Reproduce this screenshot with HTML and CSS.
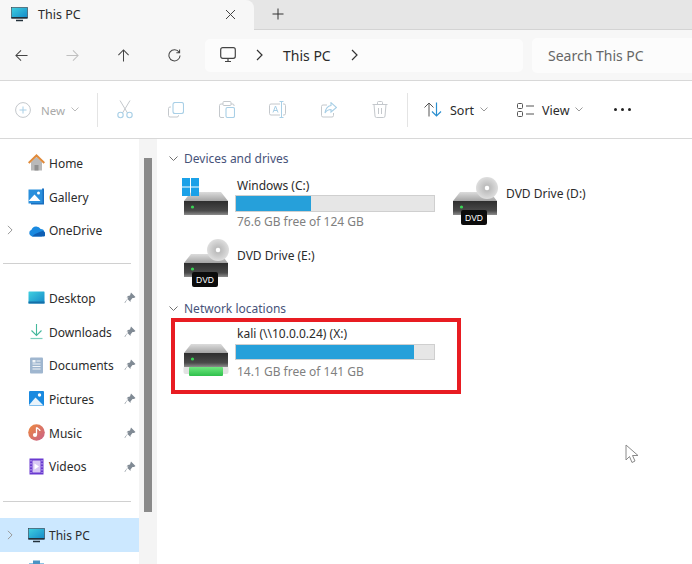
FILE: index.html
```html
<!DOCTYPE html>
<html lang="en">
<head>
    <meta charset="UTF-8">
    <title>This PC</title>
    <link rel="stylesheet" href="styles.css">
</head>
<body>
<svg class="defs" width="0" height="0">
    <defs>
        <linearGradient id="screen" x1="0" y1="0" x2="1" y2="1">
            <stop offset="0" stop-color="#3fd0e0"/>
            <stop offset="1" stop-color="#1488c8"/>
        </linearGradient>
        <linearGradient id="driveTop" x1="0" y1="0" x2="0" y2="1">
            <stop offset="0" stop-color="#dcdcdc"/>
            <stop offset="1" stop-color="#a4a4a4"/>
        </linearGradient>
        <linearGradient id="driveBody" x1="0" y1="0" x2="0" y2="1">
            <stop offset="0" stop-color="#2e2e2e"/>
            <stop offset="0.7" stop-color="#4a4a4a"/>
            <stop offset="1" stop-color="#8c8c8c"/>
        </linearGradient>
        <linearGradient id="netGreen" x1="0" y1="0" x2="0" y2="1">
            <stop offset="0" stop-color="#6fe77f"/>
            <stop offset="1" stop-color="#2fc04c"/>
        </linearGradient>
        <radialGradient id="disc">
            <stop offset="0" stop-color="#f4f4f4"/>
            <stop offset="0.25" stop-color="#bdbdbd"/>
            <stop offset="1" stop-color="#dedede"/>
        </radialGradient>
        <linearGradient id="music" x1="0" y1="0" x2="1" y2="1">
            <stop offset="0" stop-color="#ee8a3c"/>
            <stop offset="1" stop-color="#c8608c"/>
        </linearGradient>
        <symbol id="drive" viewBox="0 0 46 50">
            <path d="M8 16H38L45 25H1Z" fill="url(#driveTop)"/>
            <rect x="1" y="25" width="44" height="14" fill="url(#driveBody)"/>
            <circle cx="9.5" cy="31" r="1.6" fill="#39d353"/>
        </symbol>
        <symbol id="dvd" viewBox="0 0 46 50">
            <use href="#drive" width="46" height="50"/>
            <circle cx="35" cy="12" r="11" fill="url(#disc)"/>
            <circle cx="35" cy="12" r="2.2" fill="#fff"/>
            <rect x="9" y="34" width="26" height="15" rx="2" fill="#0c0c0c"/>
            <text class="dvd-label" x="22" y="45" text-anchor="middle">DVD</text>
        </symbol>
        <symbol id="monitor" viewBox="0 0 17 15">
            <rect x="0.5" y="0.5" width="16" height="10.5" fill="url(#screen)" stroke="#2b3a46" stroke-width="0.6"/>
            <rect x="0.5" y="10" width="16" height="1.6" fill="#23303a"/>
            <path d="M5 13.5H12" stroke="#23303a" stroke-width="1.5"/>
        </symbol>
        <symbol id="pin" viewBox="0 0 12 12">
            <path d="M7 0.5L11.5 5L10 6L8.5 6L6.5 8.5L6.5 10L3.5 7L1 11L0.5 10.5L4.5 5.5L2.5 5.5L4 4L6 3.5Z" fill="#808a94"/>
        </symbol>
        <symbol id="chev-down" viewBox="0 0 8 5">
            <path d="M0.5 0.5L4 4L7.5 0.5" fill="none" stroke="currentColor"/>
        </symbol>
        <symbol id="chev-right" viewBox="0 0 7 12">
            <path d="M1 1L6 6L1 11" fill="none" stroke="currentColor" stroke-width="1.2"/>
        </symbol>
    </defs>
</svg>

<div class="window">
    <div class="tabs">
        <div class="tab">
            <svg class="tab-icon" width="17" height="15"><use href="#monitor"/></svg>
            <span class="tab-title">This PC</span>
            <svg class="tab-close" width="11" height="11" viewBox="0 0 11 11"><path d="M1 1L10 10M10 1L1 10" stroke="#444" fill="none"/></svg>
        </div>
        <svg class="tab-new" width="12" height="12" viewBox="0 0 12 12"><path d="M6 0.5V11.5M0.5 6H11.5" stroke="#333" fill="none"/></svg>
    </div>

    <div class="nav">
        <div class="nav-buttons">
            <svg width="13" height="13" viewBox="0 0 14 14"><path d="M13.5 7H1M6.5 1.5L1 7L6.5 12.5" stroke="#444" fill="none" stroke-width="1.1"/></svg>
            <svg width="13" height="13" viewBox="0 0 14 14"><path d="M0.5 7H13M7.5 1.5L13 7L7.5 12.5" stroke="#c0c0c0" fill="none" stroke-width="1.1"/></svg>
            <svg width="13" height="13" viewBox="0 0 14 14"><path d="M7 13.5V1M1.5 6.5L7 1L12.5 6.5" stroke="#444" fill="none" stroke-width="1.1"/></svg>
            <svg width="13" height="13" viewBox="0 0 14 14"><path d="M12 3.5A6 6 0 1 0 13 7M12.5 0.5V4H9" stroke="#444" fill="none" stroke-width="1.1"/></svg>
        </div>
        <div class="address">
            <svg width="16" height="16" viewBox="0 0 16 16"><rect x="0.7" y="0.7" width="14.6" height="10.6" rx="2" fill="none" stroke="#444" stroke-width="1.2"/><path d="M5 14.5H11M8 11.5V14" stroke="#444" stroke-width="1.2" fill="none"/></svg>
            <svg class="addr-chev" width="7" height="12"><use href="#chev-right"/></svg>
            <span class="addr-text">This PC</span>
            <svg class="addr-chev" width="7" height="12"><use href="#chev-right"/></svg>
        </div>
        <div class="search">Search This PC</div>
    </div>

    <div class="toolbar">
        <div class="tool-new">
            <svg width="16" height="16" viewBox="0 0 16 16"><circle cx="8" cy="8" r="7.4" fill="none" stroke="#c4c8cc"/><path d="M8 4.5V11.5M4.5 8H11.5" stroke="#a8cfe6" fill="none"/></svg>
            <span class="tool-label dim">New</span>
            <svg class="tool-chev dim" width="8" height="5"><use href="#chev-down"/></svg>
        </div>
        <div class="tool-sep"></div>
        <div class="tool-icons">
            <svg width="16" height="19" viewBox="0 0 16 19"><path d="M3 0.5L10.5 13M13 0.5L5.5 13" stroke="#c4c8cc" fill="none"/><circle cx="3.5" cy="15" r="2.7" fill="none" stroke="#a8cfe6" stroke-width="1.1"/><circle cx="12.5" cy="15" r="2.7" fill="none" stroke="#a8cfe6" stroke-width="1.1"/></svg>
            <svg width="16" height="16" viewBox="0 0 16 16"><path d="M3 5H2A1.5 1.5 0 0 0 0.5 6.5V13.5A1.5 1.5 0 0 0 2 15H9A1.5 1.5 0 0 0 10.5 13.5V13" stroke="#c4c8cc" fill="none"/><rect x="5" y="0.5" width="10.5" height="11" rx="2" fill="none" stroke="#a8cfe6" stroke-width="1.1"/></svg>
            <svg width="16" height="17" viewBox="0 0 16 17"><path d="M4 3H2A1.5 1.5 0 0 0 0.5 4.5V15A1.5 1.5 0 0 0 2 16.5H5M12 3H14A1.5 1.5 0 0 1 15 4V5" stroke="#c4c8cc" fill="none"/><rect x="4" y="0.5" width="8" height="4" rx="1" fill="#fff" stroke="#c4c8cc"/><rect x="7" y="6.5" width="8.5" height="10" rx="1.5" fill="#fff" stroke="#a8cfe6" stroke-width="1.1"/></svg>
            <svg width="17" height="17" viewBox="0 0 17 17"><path d="M11 3H2A1.5 1.5 0 0 0 0.5 4.5V12.5A1.5 1.5 0 0 0 2 14H11M14 3H15A1.5 1.5 0 0 1 16.5 4.5V12.5A1.5 1.5 0 0 1 15 14H14" stroke="#c4c8cc" fill="none"/><path d="M12.5 0.5V16.5M10.5 0.5H14.5M10.5 16.5H14.5" stroke="#a8cfe6" fill="none"/><path d="M4 11.5L6.5 5L9 11.5M5 9.5H8" stroke="#a8cfe6" fill="none"/></svg>
            <svg width="16" height="16" viewBox="0 0 16 16"><path d="M6 3H2A1.5 1.5 0 0 0 0.5 4.5V13.5A1.5 1.5 0 0 0 2 15H11A1.5 1.5 0 0 0 12.5 13.5V11" stroke="#c4c8cc" fill="none"/><path d="M10 0.7L15.5 5.5L10 10V7.5C7.5 7.5 5.5 8.5 4 11C4.5 7 7 4 10 3.5Z" fill="none" stroke="#a8cfe6" stroke-width="1.1"/></svg>
            <svg width="16" height="17" viewBox="0 0 16 17"><path d="M0.5 3.5H15.5M5.5 3.5V1.5A1 1 0 0 1 6.5 0.5H9.5A1 1 0 0 1 10.5 1.5V3.5M2 3.5L3 15A1.5 1.5 0 0 0 4.5 16.5H11.5A1.5 1.5 0 0 0 13 15L14 3.5M6.5 7V13M9.5 7V13" stroke="#c4c8cc" fill="none"/></svg>
        </div>
        <div class="tool-sep"></div>
        <div class="tool-sort">
            <svg width="18" height="15" viewBox="0 0 18 15"><path d="M5 14.5V1M0.5 5.5L5 1L9.5 5.5" stroke="#555" fill="none"/><path d="M12.5 0.5V14M8 9.5L12.5 14L17 9.5" stroke="#2b8fd0" fill="none" stroke-width="1.2"/></svg>
            <span class="tool-label">Sort</span>
            <svg class="tool-chev" width="8" height="5"><use href="#chev-down"/></svg>
        </div>
        <div class="tool-view">
            <svg width="17" height="14" viewBox="0 0 17 14"><rect x="0.5" y="0.5" width="5" height="5" rx="1" fill="none" stroke="#555"/><rect x="0.5" y="8.5" width="5" height="5" rx="1" fill="none" stroke="#555"/><path d="M9 3H17M9 11H17" stroke="#555" fill="none"/></svg>
            <span class="tool-label">View</span>
            <svg class="tool-chev" width="8" height="5"><use href="#chev-down"/></svg>
        </div>
        <div class="tool-more"><i></i><i></i><i></i></div>
    </div>

    <div class="content">
        <div class="sidebar">
            <div class="side-row">
                <svg class="side-icon" width="17" height="17" viewBox="0 0 17 17"><path d="M3 8V16.5H14V8L8.5 3Z" fill="#b9b9b9"/><rect x="6.5" y="11" width="4" height="5.5" fill="#8f8f8f"/><path d="M0.7 9L8.5 1.5L16.3 9" fill="none" stroke="#e08a3a" stroke-width="2"/></svg>
                <span class="side-text">Home</span>
            </div>
            <div class="side-row">
                <svg class="side-icon" width="17" height="17" viewBox="0 0 17 17"><rect x="14" y="0.5" width="2" height="15" fill="#1a6fc0"/><rect x="0.5" y="1.5" width="14" height="14" fill="#2a8fdc"/><circle cx="10.5" cy="5" r="1.5" fill="#fff"/><path d="M0.5 13L6.5 6.5L12.5 13Z" fill="#fff"/><rect x="3" y="15" width="13" height="1.5" fill="#1a6fc0"/></svg>
                <span class="side-text">Gallery</span>
            </div>
            <div class="side-row">
                <span class="side-chev"><svg width="6" height="10"><use href="#chev-right"/></svg></span>
                <svg class="side-icon" width="17" height="17" viewBox="0 0 17 17"><path d="M4 14.5A3.5 3.5 0 0 1 3.5 7.8A5 5 0 0 1 12.6 7A3.8 3.8 0 0 1 13.5 14.5Z" fill="#1a8ae0"/><path d="M4 14.5H16A2.5 2.5 0 0 0 13 9.5L7 12Z" fill="#0f5fb4"/></svg>
                <span class="side-text">OneDrive</span>
            </div>

            <div class="side-divider"></div>

            <div class="side-row">
                <svg class="side-icon" width="17" height="17" viewBox="0 0 17 17"><rect x="0.5" y="2.5" width="16" height="12" rx="0.5" fill="url(#screen)"/><rect x="0.5" y="12.5" width="16" height="2" fill="#146fa8"/></svg>
                <span class="side-text">Desktop</span>
                <svg class="side-pin" width="12" height="12"><use href="#pin"/></svg>
            </div>
            <div class="side-row">
                <svg class="side-icon" width="17" height="17" viewBox="0 0 17 17"><path d="M8.5 1V12M3.5 7.5L8.5 12.5L13.5 7.5" fill="none" stroke="#45b89c" stroke-width="1.1"/><path d="M2.5 15.5H14.5" stroke="#7ccfbc" stroke-width="1.2"/></svg>
                <span class="side-text">Downloads</span>
                <svg class="side-pin" width="12" height="12"><use href="#pin"/></svg>
            </div>
            <div class="side-row">
                <svg class="side-icon" width="17" height="17" viewBox="0 0 17 17"><rect x="2" y="0.5" width="13" height="16" rx="1" fill="#9fb6cf"/><path d="M8.5 4H12.5M4.5 7H12.5M4.5 9.5H12.5M4.5 12H12.5" stroke="#f2f5f8"/><rect x="4.5" y="3" width="3" height="2.5" fill="#f2f5f8"/></svg>
                <span class="side-text">Documents</span>
                <svg class="side-pin" width="12" height="12"><use href="#pin"/></svg>
            </div>
            <div class="side-row">
                <svg class="side-icon" width="17" height="17" viewBox="0 0 17 17"><rect x="1" y="1" width="15" height="15" rx="1" fill="#1a8ae0"/><circle cx="11.5" cy="5" r="1.7" fill="#fff"/><path d="M1 15L7.5 7.5L15.5 15.5H1Z" fill="#e8f3fb"/></svg>
                <span class="side-text">Pictures</span>
                <svg class="side-pin" width="12" height="12"><use href="#pin"/></svg>
            </div>
            <div class="side-row">
                <svg class="side-icon" width="17" height="17" viewBox="0 0 17 17"><circle cx="8.5" cy="8.5" r="8.3" fill="url(#music)"/><path d="M8.5 3.5V11" stroke="#fff" stroke-width="1.3"/><circle cx="7" cy="11" r="2.1" fill="#fff"/><path d="M8.5 3.5C10 5 12 5 12 7" fill="none" stroke="#fff" stroke-width="1.3"/></svg>
                <span class="side-text">Music</span>
                <svg class="side-pin" width="12" height="12"><use href="#pin"/></svg>
            </div>
            <div class="side-row">
                <svg class="side-icon" width="17" height="17" viewBox="0 0 17 17"><rect x="1.5" y="0.5" width="14" height="16" fill="#6a3ad0"/><rect x="4.5" y="2.5" width="8" height="12" fill="#d8c8f4"/><path d="M6.5 5.5L11 8.5L6.5 11.5Z" fill="#fff"/><path d="M3 2V15M14 2V15" stroke="#b59cec" stroke-width="1.3" stroke-dasharray="1.5 1.5"/></svg>
                <span class="side-text">Videos</span>
                <svg class="side-pin" width="12" height="12"><use href="#pin"/></svg>
            </div>

            <div class="side-divider side-divider-low"></div>

            <div class="side-row selected">
                <span class="side-chev"><svg width="6" height="10"><use href="#chev-right"/></svg></span>
                <svg class="side-icon" width="17" height="15"><use href="#monitor"/></svg>
                <span class="side-text">This PC</span>
            </div>
            <div class="side-row">
                <svg class="side-icon" width="17" height="17" viewBox="0 0 17 17"><rect x="1" y="3" width="15" height="12" fill="#8cc4e4"/><rect x="5" y="0.5" width="7" height="5" fill="#4a94c4"/></svg>
            </div>
        </div>

        <div class="scrollbar"><div class="thumb"></div></div>

        <div class="main">
            <div class="group-head">
                <svg width="9" height="5" viewBox="0 0 9 5"><path d="M0.5 0.5L4.5 4.5L8.5 0.5" fill="none" stroke="#707070"/></svg>
                <span>Devices and drives</span>
            </div>
            <div class="drives">
                <div class="drive">
                    <div class="drive-icon">
                        <svg width="46" height="50"><use href="#drive"/></svg>
                        <svg class="win-logo" width="17" height="18" viewBox="0 0 17 18"><path d="M0 0H8V8.5H0ZM9 0H17V8.5H9ZM0 9.5H8V18H0ZM9 9.5H17V18H9Z" fill="#1ba1e8"/></svg>
                    </div>
                    <div class="drive-info">
                        <div class="drive-name">Windows (C:)</div>
                        <div class="bar"><div class="bar-fill" style="width: 38%"></div></div>
                        <div class="drive-free">76.6 GB free of 124 GB</div>
                    </div>
                </div>
                <div class="drive">
                    <svg class="drive-svg" width="46" height="50"><use href="#dvd"/></svg>
                    <div class="drive-name drive-name-solo">DVD Drive (D:)</div>
                </div>
                <div class="drive">
                    <svg class="drive-svg" width="46" height="50"><use href="#dvd"/></svg>
                    <div class="drive-name drive-name-solo">DVD Drive (E:)</div>
                </div>
            </div>

            <div class="group-head group-head-net">
                <svg width="9" height="5" viewBox="0 0 9 5"><path d="M0.5 0.5L4.5 4.5L8.5 0.5" fill="none" stroke="#707070"/></svg>
                <span>Network locations</span>
            </div>
            <div class="drive net-drive">
                <svg class="net-icon" width="46" height="50" viewBox="0 0 46 50">
                    <rect x="0.5" y="38" width="45" height="8" rx="2" fill="#e2e2e2"/>
                    <use href="#drive" width="46" height="50"/>
                    <rect x="6" y="39" width="34" height="9" rx="1" fill="url(#netGreen)"/>
                </svg>
                <div class="drive-info">
                    <div class="drive-name">kali (\\10.0.0.24) (X:)</div>
                    <div class="bar bar-net"><div class="bar-fill" style="width: 90%"></div></div>
                    <div class="drive-free drive-free-net">14.1 GB free of 141 GB</div>
                </div>
            </div>
        </div>
    </div>

    <svg class="cursor" width="15" height="20" viewBox="0 0 15 20"><path d="M1 1V16L4.5 12.5L7 18.5L10 17L7.5 11.5H13Z" fill="#fff" stroke="#8a8a8a"/></svg>
</div>
</body>
</html>
```

FILE: styles.css
```css
*{
    margin: 0;
    padding: 0;
    box-sizing: border-box;
}

body{
    font-family: "Noto Sans", "Open Sans", sans-serif;
    font-size: 12px;
    color: #2b2b2b;
    background-color: #fff;
}

.defs{
    position: absolute;
}

.dvd-label{
    font-family: "Liberation Sans", sans-serif;
    font-size: 8.5px;
    fill: #fff;
}

.window{
    width: 692px;
    height: 564px;
    overflow: hidden;
    position: relative;
}

/* tab strip */
.tabs{
    height: 30px;
    display: flex;
    align-items: center;
    background-color: #e6e6e6;
    border-bottom: 1px solid #d4d4d4;
}

.tab{
    width: 254px;
    height: 30px;
    display: flex;
    align-items: center;
    padding: 0 18px 2px 11px;
    background-color: #f7f7f7;
    border-top-right-radius: 8px;
    margin-bottom: -1px;
    font-size: 12.5px;
}

.tab-title{
    margin-left: 10px;
    flex: 1;
}

.tab-new{
    margin-left: 18px;
    margin-bottom: 2px;
}

/* navigation row */
.nav{
    height: 51px;
    display: flex;
    align-items: center;
    background-color: #f7f7f7;
    border-bottom: 1px solid #d8d8d8;
}

.nav-buttons{
    width: 205px;
    display: flex;
    padding-left: 15px;
    gap: 38px;
}

.address{
    width: 318px;
    height: 33px;
    display: flex;
    align-items: center;
    padding-left: 15px;
    background-color: #fcfcfc;
    border-radius: 5px;
    font-size: 14px;
}

.addr-chev{
    margin-left: 20px;
    color: #333;
}

.addr-text{
    margin-left: 20px;
    padding-top: 1px;
}

.search{
    width: 160px;
    height: 35px;
    margin-left: 9px;
    padding-left: 16px;
    line-height: 36px;
    background-color: #fcfcfc;
    border-radius: 5px 0 0 5px;
    font-size: 14px;
    color: #666;
}

/* command bar */
.toolbar{
    height: 58px;
    display: flex;
    align-items: center;
    background-color: #fff;
    border-bottom: 1px solid #d8d8d8;
}

.tool-new{
    width: 97px;
    display: flex;
    align-items: center;
    padding-left: 15px;
}

.tool-sep{
    width: 1px;
    height: 34px;
    background-color: #e4e4e4;
}

.tool-icons{
    width: 309px;
    display: flex;
    justify-content: space-around;
    align-items: center;
    padding: 0 2px;
}

.tool-sort,
.tool-view{
    display: flex;
    align-items: center;
}

.tool-sort{
    margin-left: 16px;
}

.tool-view{
    margin-left: 29px;
}

.tool-label{
    margin-left: 8px;
    padding-top: 1px;
    font-size: 12.5px;
}

.tool-chev{
    margin-left: 6px;
    color: #999;
}

.dim{
    color: #aaa;
}

.tool-new .tool-label{
    margin-left: 10px;
    font-size: 11.5px;
}

.tool-new .tool-chev{
    color: #bbb;
}

.tool-more{
    display: flex;
    gap: 4px;
    margin-left: 31px;
}

.tool-more i{
    width: 3px;
    height: 3px;
    border-radius: 50%;
    background-color: #222;
}

/* left pane */
.content{
    display: flex;
    height: 425px;
}

.sidebar{
    width: 139px;
    flex: none;
    padding-top: 7px;
}

.side-row{
    height: 33.7px;
    display: flex;
    align-items: center;
    padding-left: 28px;
    position: relative;
}

.side-icon{
    flex: none;
    margin-right: 4px;
}

.side-text{
    padding-top: 1px;
}

.side-chev{
    position: absolute;
    left: 7px;
    top: 12px;
    color: #999;
    line-height: 0;
}

.side-pin{
    position: absolute;
    left: 124px;
    top: 11px;
}

.selected{
    background-color: #cce8ff;
}

.side-divider{
    height: 1px;
    margin: 16px 8px 17px 3px;
    background-color: #d0d0d0;
}

.side-divider-low{
    margin-top: 18px;
    margin-bottom: 16px;
}

/* scroll bar */
.scrollbar{
    width: 18px;
    flex: none;
    padding: 19px 5px 0;
    background-color: #f4f4f4;
}

.thumb{
    height: 354px;
    background-color: #8a8a8a;
}

/* right pane */
.main{
    flex: 1;
    padding: 9px 0 0 14px;
}

.group-head{
    height: 20px;
    display: flex;
    align-items: center;
    gap: 6px;
    margin-left: -2px;
    color: #47537a;
}

.group-head-net{
    margin-top: 10px;
}

.drives{
    display: grid;
    grid-template-columns: 269px 220px;
    row-gap: 8px;
    margin-top: 8px;
    padding-left: 12px;
}

.drive{
    display: flex;
    gap: 6px;
}

.drive-icon{
    position: relative;
    width: 46px;
    height: 50px;
    flex: none;
}

.win-logo{
    position: absolute;
    left: -1px;
    top: 2px;
}

.drive-svg{
    flex: none;
}

.drive-info{
    width: 200px;
}

.drive-name{
    height: 18px;
    line-height: 20px;
    padding-left: 2px;
}

.drive-name-solo{
    margin-top: 8px;
}

.bar{
    height: 17px;
    margin-top: 1px;
    background-color: #e6e6e6;
    border: 1px solid #cfcfcf;
}

.bar-net{
    height: 16px;
    margin-top: 2px;
}

.bar-fill{
    height: 100%;
    background-color: #26a0da;
}

.drive-free{
    height: 18px;
    line-height: 20px;
    padding-left: 2px;
    color: #808080;
}

.drive-free-net{
    line-height: 24px;
}

.net-drive{
    width: 290px;
    height: 76px;
    border: 4px solid #e81c22;
    padding: 2px 0 0 8px;
}

.net-icon{
    flex: none;
    margin-top: 4px;
}

.cursor{
    position: absolute;
    left: 625px;
    top: 444px;
}
```
